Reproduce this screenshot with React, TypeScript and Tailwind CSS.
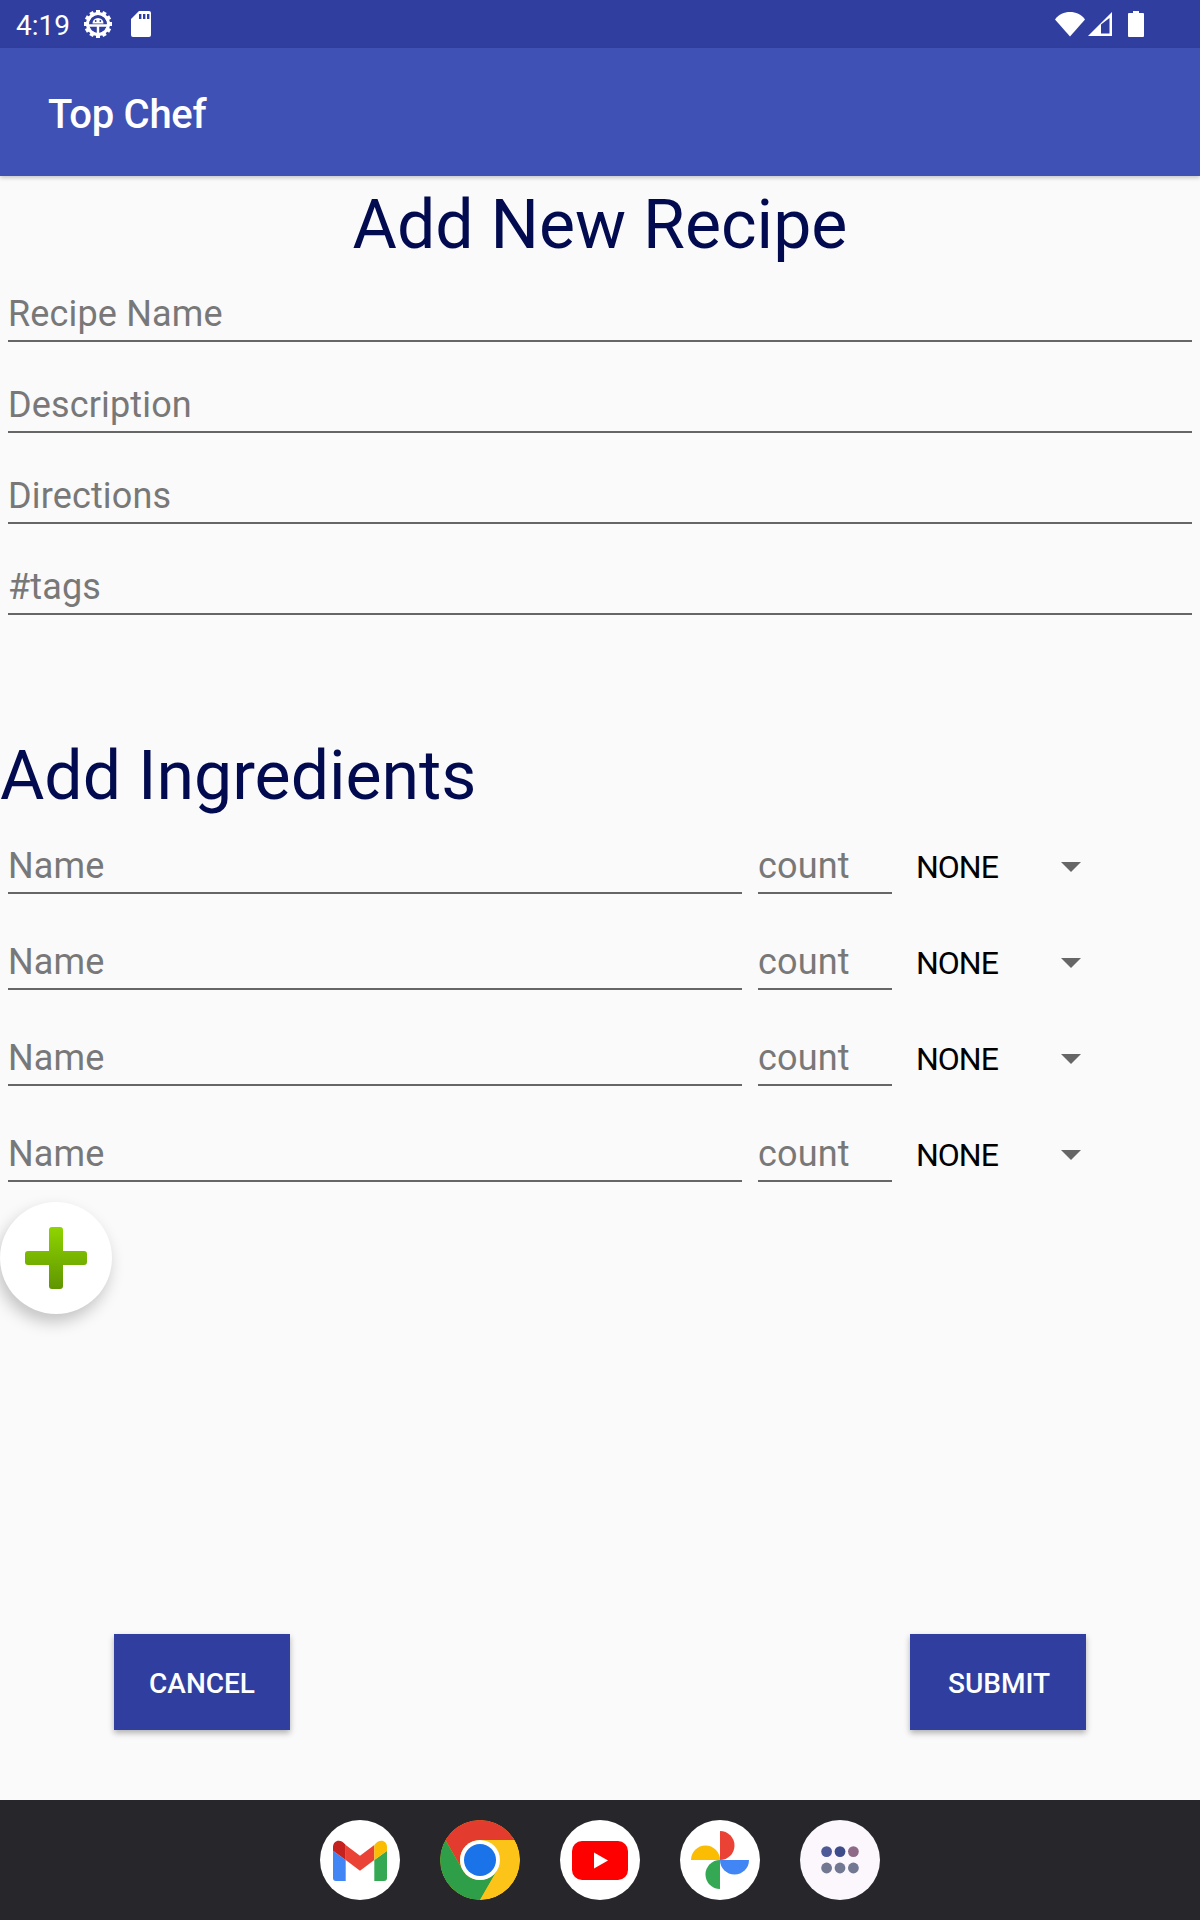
const FIELD_LABELS = ["Recipe Name", "Description", "Directions", "#tags"];

function GearIcon() {
  const teeth = Array.from({ length: 12 }, (_, i) => i * 30);
  return (
    <svg width="30" height="30" viewBox="0 0 30 30" fill="none">
      {teeth.map((a) => (
        <rect key={a} x="13" y="1" width="4" height="5" fill="#fff" transform={`rotate(${a} 15 15)`} />
      ))}
      <circle cx="15" cy="15" r="10.5" stroke="#fff" strokeWidth="3" />
      <path d="M6 16.5H24M15 16.5V25" stroke="#fff" strokeWidth="2.4" />
      <path d="M9.5 14.5a5.5 5.5 0 0 1 11 0z" fill="#fff" />
      <circle cx="12.7" cy="12" r="0.9" fill="#303f9f" />
      <circle cx="17.3" cy="12" r="0.9" fill="#303f9f" />
    </svg>
  );
}

function SdIcon() {
  return (
    <svg width="20" height="26" viewBox="0 0 20 26">
      <path d="M8 0H18a2 2 0 0 1 2 2V24a2 2 0 0 1-2 2H2a2 2 0 0 1-2-2V8z" fill="#fff" />
      <rect x="8" y="3" width="2.4" height="5" fill="#303f9f" />
      <rect x="12" y="3" width="2.4" height="5" fill="#303f9f" />
      <rect x="16" y="3" width="2.4" height="5" fill="#303f9f" />
    </svg>
  );
}

function WifiIcon() {
  return (
    <svg width="30" height="26" viewBox="0 0 30 26">
      <path d="M0 8.5C4 3 9 1 15 1s11 2 15 7.5L15 25.5z" fill="#fff" />
    </svg>
  );
}

function SignalIcon() {
  return (
    <svg width="26" height="26" viewBox="0 0 26 26">
      <path d="M25 1V25H1z" fill="#fff" />
      <path d="M14 13.5L22.5 7V22.5H14z" fill="#303f9f" />
    </svg>
  );
}

function BatteryIcon() {
  return (
    <svg width="16" height="26" viewBox="0 0 16 26">
      <path d="M5 0H11V2H15a1 1 0 0 1 1 1V25a1 1 0 0 1-1 1H1a1 1 0 0 1-1-1V3a1 1 0 0 1 1-1H5z" fill="#fff" />
    </svg>
  );
}

function PlusIcon() {
  return (
    <svg width="62" height="62" viewBox="0 0 62 62">
      <defs>
        <linearGradient id="plusGrad" x1="0" y1="0" x2="0" y2="1">
          <stop offset="0" stopColor="#8fd400" />
          <stop offset="1" stopColor="#5f9600" />
        </linearGradient>
      </defs>
      <path
        d="M27 0h8a3 3 0 0 1 3 3v21h21a3 3 0 0 1 3 3v8a3 3 0 0 1-3 3H38v21a3 3 0 0 1-3 3h-8a3 3 0 0 1-3-3V38H3a3 3 0 0 1-3-3v-8a3 3 0 0 1 3-3h21V3a3 3 0 0 1 3-3z"
        fill="url(#plusGrad)"
      />
    </svg>
  );
}

function GmailIcon() {
  return (
    <svg width="54" height="41" viewBox="0 0 54 41">
      <path d="M0 10.7L12.7 20V41H3a3 3 0 0 1-3-3z" fill="#4285f4" />
      <path d="M41.3 20L54 10.7V38a3 3 0 0 1-3 3H41.3z" fill="#34a853" />
      <path d="M12.7 5L27 15.7 41.3 5V20L27 30.7 12.7 20z" fill="#ea4335" />
      <path d="M0 7C0 0 8-2 12.7 5V20L0 10.7z" fill="#c5221f" />
      <path d="M41.3 5C46-2 54 0 54 7V10.7L41.3 20z" fill="#fbbc04" />
    </svg>
  );
}

function ChromeIcon() {
  return (
    <svg width="80" height="80" viewBox="0 0 80 80">
      <circle cx="40" cy="40" r="40" fill="#fbbc04" />
      <path d="M40 0A40 40 0 0 1 74.6 20H40A20 20 0 0 0 22.7 50L5.4 20A40 40 0 0 1 40 0z" fill="#e33b2e" />
      <path d="M5.4 20L22.7 50A20 20 0 0 0 57.3 50L40 80A40 40 0 0 1 5.4 20z" fill="#2e9e48" />
      <path d="M57.3 50L40 80A40 40 0 0 0 74.6 20H40A20 20 0 0 1 57.3 50z" fill="#fcc419" />
      <circle cx="40" cy="40" r="20" fill="#fff" />
      <circle cx="40" cy="40" r="16" fill="#1a73e8" />
    </svg>
  );
}

function YoutubeIcon() {
  return (
    <svg width="56" height="39" viewBox="0 0 56 39">
      <rect x="0" y="0" width="56" height="39" rx="10" fill="#ff0000" />
      <path d="M22 11.5L36 19.5 22 27.5z" fill="#fff" />
    </svg>
  );
}

function PhotosIcon() {
  return (
    <svg width="58" height="58" viewBox="0 0 58 58">
      <path d="M29 0a14.5 14.5 0 0 1 0 29z" fill="#ea4335" />
      <path d="M58 29a14.5 14.5 0 0 1-29 0z" fill="#4285f4" />
      <path d="M29 58a14.5 14.5 0 0 1 0-29z" fill="#34a853" />
      <path d="M0 29a14.5 14.5 0 0 1 29 0z" fill="#fbbc04" />
    </svg>
  );
}

function AppsIcon() {
  const colors = ["#4e5a98", "#3f4c8c", "#8e6a88", "#737892", "#737892", "#737892"];
  return (
    <svg width="38" height="28" viewBox="0 0 38 28">
      {colors.map((c, i) => (
        <circle key={i} cx={5.6 + (i % 3) * 13.4} cy={i < 3 ? 5.6 : 22} r="5.4" fill={c} />
      ))}
    </svg>
  );
}

function DockCircle({ children, bg = "bg-white" }: { children: React.ReactNode; bg?: string }) {
  return <div className={`flex h-20 w-20 items-center justify-center overflow-hidden rounded-full ${bg}`}>{children}</div>;
}

function TextField({ label, className = "" }: { label: string; className?: string }) {
  return (
    <div className={`h-[50px] border-b-2 border-[#666666] text-[36px] leading-[44px] tracking-[0.15px] text-[#787878] ${className}`}>
      {label}
    </div>
  );
}

function IngredientRow() {
  return (
    <div className="flex h-[96px] items-end">
      <TextField label="Name" className="ml-2 w-[734px]" />
      <TextField label="count" className="ml-4 w-[134px]" />
      <div className="mb-[2px] ml-[24px] flex h-[50px] w-[171px] items-center justify-between">
        <span className="text-[32px] leading-[50px] tracking-[-1px] text-black">NONE</span>
        <span className="mr-[6px] h-0 w-0 border-x-[10px] border-t-[10px] border-x-transparent border-t-[#666666]" />
      </div>
    </div>
  );
}

export default function App() {
  return (
    <div className="flex h-[1920px] w-[1200px] flex-col overflow-hidden bg-[#fafafa] font-['Roboto',sans-serif]">
      <div className="flex h-12 shrink-0 items-center justify-between bg-[#303f9f] pl-4 pr-[56px] text-white">
        <div className="flex items-center">
          <span className="pt-1 text-[28px] leading-[48px]">4:19</span>
          <span className="ml-[13px] flex"><GearIcon /></span>
          <span className="ml-[18px] flex"><SdIcon /></span>
        </div>
        <div className="flex items-center gap-[2px]">
          <WifiIcon />
          <SignalIcon />
          <span className="ml-[13px] flex"><BatteryIcon /></span>
        </div>
      </div>

      <div className="relative z-10 flex h-[128px] shrink-0 items-center bg-[#3f51b5] pl-12 pt-[6px] shadow-[0_2px_4px_rgba(0,0,0,0.2)]">
        <span className="text-[40px] font-medium tracking-[-0.3px] text-white">Top Chef</span>
      </div>

      <div className="flex min-h-0 flex-1 flex-col">
        <h1 className="pt-[11px] text-center text-[68px] leading-[76px] text-[#020b4f]">Add New Recipe</h1>
        <div className="mt-[29px] flex flex-col gap-[41px] px-2">
          {FIELD_LABELS.map((l) => (
            <TextField key={l} label={l} />
          ))}
        </div>
        <h2 className="mt-[123px] text-[68px] leading-[76px] text-[#020b4f]">Add Ingredients</h2>
        <div className="-mt-[16px] flex flex-col">
          <IngredientRow />
          <IngredientRow />
          <IngredientRow />
          <IngredientRow />
        </div>
        <div className="mt-[20px] flex h-[112px] w-[112px] items-center justify-center rounded-full bg-white shadow-[-3px_8px_16px_rgba(0,0,0,0.22)]">
          <PlusIcon />
        </div>
        <div className="mt-[320px] flex justify-between pl-[114px] pr-[114px]">
          <button className="h-[96px] w-[176px] bg-[#303f9f] pt-[4px] text-[28px] font-medium text-white shadow-[0_3px_6px_rgba(0,0,0,0.3)]">CANCEL</button>
          <button className="h-[96px] w-[176px] bg-[#303f9f] pl-[2px] pt-[4px] text-[28px] font-medium text-white shadow-[0_3px_6px_rgba(0,0,0,0.3)]">SUBMIT</button>
        </div>
      </div>

      <div className="flex h-[120px] shrink-0 items-center justify-center gap-10 bg-[#26262b]">
        <DockCircle><GmailIcon /></DockCircle>
        <DockCircle bg="bg-[#26262b]"><ChromeIcon /></DockCircle>
        <DockCircle><YoutubeIcon /></DockCircle>
        <DockCircle><PhotosIcon /></DockCircle>
        <DockCircle bg="bg-[#fbf7fd]"><AppsIcon /></DockCircle>
      </div>
    </div>
  );
}
